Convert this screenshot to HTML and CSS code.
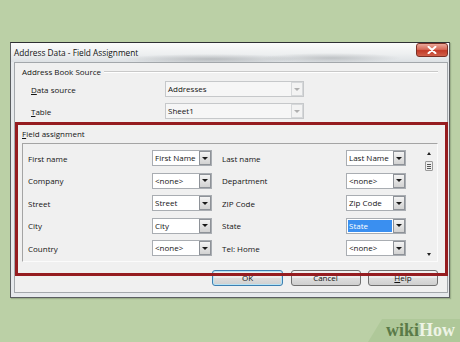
FILE: index.html
```html
<!DOCTYPE html>
<html lang="en">
<head>
<meta charset="utf-8">
<title>Address Data - Field Assignment</title>
<link rel="stylesheet" href="styles.css">
</head>
<body>
<div class="stage">
  <div class="dialog">
    <div class="titlebar">
      <span class="title">Address Data - Field Assignment</span>
      <span class="close">
        <svg width="10" height="8" viewBox="0 0 10 8"><path d="M1.5 0.8 L8.5 7.2 M8.5 0.8 L1.5 7.2" stroke="#fff" stroke-width="2" stroke-linecap="round"/></svg>
      </span>
    </div>
    <div class="panel">
      <div class="group-head"><span>Address Book Source</span><span class="rule"></span></div>
      <div class="src-row">
        <span class="src-label"><u>D</u>ata source</span>
        <div class="combo combo-wide disabled"><span class="combo-text">Addresses</span><span class="drop"><span class="tri"></span></span></div>
      </div>
      <div class="src-row src-row-2">
        <span class="src-label"><u>T</u>able</span>
        <div class="combo combo-wide disabled"><span class="combo-text">Sheet1</span><span class="drop"><span class="tri"></span></span></div>
      </div>
      <div class="field-head"><u>F</u>ield assignment</div>
      <div class="field-box">
        <div class="field-grid">
          <span class="f-label">First name</span>
          <div class="combo"><span class="combo-text">First Name</span><span class="drop"><span class="tri"></span></span></div>
          <span class="f-label">Last name</span>
          <div class="combo"><span class="combo-text">Last Name</span><span class="drop"><span class="tri"></span></span></div>

          <span class="f-label">Company</span>
          <div class="combo"><span class="combo-text">&lt;none&gt;</span><span class="drop"><span class="tri"></span></span></div>
          <span class="f-label">Department</span>
          <div class="combo"><span class="combo-text">&lt;none&gt;</span><span class="drop"><span class="tri"></span></span></div>

          <span class="f-label">Street</span>
          <div class="combo"><span class="combo-text">Street</span><span class="drop"><span class="tri"></span></span></div>
          <span class="f-label">ZIP Code</span>
          <div class="combo"><span class="combo-text">Zip Code</span><span class="drop"><span class="tri"></span></span></div>

          <span class="f-label">City</span>
          <div class="combo"><span class="combo-text">City</span><span class="drop"><span class="tri"></span></span></div>
          <span class="f-label">State</span>
          <div class="combo selected"><span class="combo-text">State</span><span class="drop"><span class="tri"></span></span></div>

          <span class="f-label">Country</span>
          <div class="combo"><span class="combo-text">&lt;none&gt;</span><span class="drop"><span class="tri"></span></span></div>
          <span class="f-label">Tel: Home</span>
          <div class="combo"><span class="combo-text">&lt;none&gt;</span><span class="drop"><span class="tri"></span></span></div>
        </div>
        <div class="scrollbar">
          <span class="arrow-up"></span>
          <span class="thumb"><i></i><i></i><i></i></span>
          <span class="arrow-down"></span>
        </div>
      </div>
      <div class="buttons">
        <span class="btn btn-default">OK</span>
        <span class="btn btn-cancel">Cancel</span>
        <span class="btn btn-help"><u>H</u>elp</span>
      </div>
    </div>
    <div class="annot"></div>
  </div>
  <div class="logo-band"></div>
  <div class="logo"><span class="wiki">wiki</span><span class="how">How</span></div>
</div>
</body>
</html>
```

FILE: styles.css
```css
* { box-sizing: border-box; }

html, body {
  margin: 0;
  padding: 0;
}

body {
  width: 460px;
  height: 342px;
  overflow: hidden;
  background: #bbd0a6;
  font-family: "Open Sans", "Noto Sans", sans-serif;
  font-size: 8px;
  color: #141414;
}

.stage {
  position: relative;
  width: 460px;
  height: 342px;
  padding: 42px 0 0 10px;
  background: #bbd0a6;
}

.dialog {
  position: relative;
  width: 440px;
  height: 256px;
  display: flex;
  flex-direction: column;
  border: 1px solid #5a5d60;
  border-top-color: #2e3033;
  background: #e6e9ec;
  box-shadow: 1px 1px 1px rgba(60, 70, 50, 0.25);
}

.titlebar {
  height: 19px;
  flex: none;
  display: flex;
  align-items: flex-start;
  padding-left: 3px;
  background:
    radial-gradient(ellipse 90px 5px at 200px 16px, rgba(120, 124, 128, 0.4), rgba(120, 124, 128, 0) 100%),
    radial-gradient(ellipse 70px 5px at 320px 15px, rgba(120, 124, 128, 0.35), rgba(120, 124, 128, 0) 100%),
    linear-gradient(to bottom, #fbfbfb 0%, #eef0f1 55%, #dde1e4 100%);
}

.title {
  align-self: center;
  font-size: 8.3px;
  color: #111;
  line-height: 12px;
  margin-top: 1px;
}

.close {
  margin-left: auto;
  margin-right: 1px;
  width: 32px;
  height: 14px;
  border: 1px solid #7a3026;
  border-radius: 3px;
  background: linear-gradient(to bottom, #eaa89a 0%, #d66a58 45%, #c23a27 55%, #d0604a 100%);
  display: flex;
  align-items: center;
  justify-content: center;
}

.close svg { display: block; }

.panel {
  flex: 1;
  margin: 0 1px 4px 3px;
  background: #f0f0f0;
  border: 1px solid #a3a7ab;
  padding: 3px 9px 0 0;
  display: flex;
  flex-direction: column;
}

.group-head {
  display: flex;
  align-items: center;
  height: 12px;
  padding-left: 7px;
  line-height: 12px;
}

.rule {
  flex: 1;
  margin-left: 3px;
  height: 2px;
  border-top: 1px solid #c9c9c9;
  border-bottom: 1px solid #ffffff;
  margin-top: -1px;
}

.src-row {
  display: flex;
  align-items: center;
  margin-top: 3px;
  padding-left: 16px;
  height: 16px;
}

.src-row-2 { margin-top: 6px; }

.src-label {
  width: 134px;
  flex: none;
}

u { text-decoration: underline; text-underline-offset: 1px; }

.combo {
  position: relative;
  display: flex;
  align-items: stretch;
  width: 60px;
  height: 16px;
  background: #ffffff;
  border: 1px solid #a9adb2;
  padding: 0 0 0 1px;
}

.combo-wide { width: 139px; }

.combo-text {
  flex: 1;
  margin: 1px 1px 1px 0;
  line-height: 12px;
  padding-left: 1px;
  white-space: nowrap;
  overflow: hidden;
}

.drop {
  flex: none;
  width: 12px;
  border: 1px solid #8e9298;
  background: linear-gradient(to bottom, #f4f4f4 0%, #e2e2e2 50%, #d2d2d2 100%);
  display: flex;
  align-items: center;
  justify-content: center;
}

.tri {
  width: 0;
  height: 0;
  border-left: 3px solid transparent;
  border-right: 3px solid transparent;
  border-top: 3px solid #1a1a1a;
}

.disabled {
  background: #f6f6f6;
  border-color: #c6c8ca;
}

.disabled .drop {
  border-color: #d6d8da;
  background: #f3f3f3;
}

.disabled .tri { border-top-color: #b0b0b0; }

.selected .combo-text {
  background: #3a8ff0;
  color: #ffffff;
}

.field-head {
  margin-top: 9px;
  padding-left: 7px;
  height: 12px;
  line-height: 12px;
}

.field-box {
  margin: 3px 0 0 7px;
  height: 119px;
  border-top: 1px solid #a4a4a4;
  border-left: 1px solid #a4a4a4;
  border-right: 1px solid #fbfbfb;
  border-bottom: 1px solid #fbfbfb;
  display: flex;
  padding: 6px 4px 0 5px;
}

.field-grid {
  display: grid;
  grid-template-columns: 124px 70px 124px 60px;
  grid-auto-rows: 16px;
  row-gap: 6.5px;
  align-items: center;
}

.f-label { white-space: nowrap; }

.scrollbar {
  margin-left: auto;
  width: 9px;
  display: flex;
  flex-direction: column;
  align-items: center;
  padding-top: 2px;
  height: 106px;
}

.arrow-up {
  width: 0;
  height: 0;
  border-left: 2.5px solid transparent;
  border-right: 2.5px solid transparent;
  border-bottom: 3px solid #222;
}

.thumb {
  margin-top: 6px;
  width: 8px;
  height: 10px;
  border: 1px solid #9a9a9a;
  border-radius: 1px;
  background: #eeeeee;
  display: flex;
  flex-direction: column;
  justify-content: center;
  align-items: center;
  gap: 1px;
}

.thumb i {
  display: block;
  width: 4px;
  height: 1px;
  background: #555;
}

.arrow-down {
  margin-top: auto;
  width: 0;
  height: 0;
  border-left: 2.5px solid transparent;
  border-right: 2.5px solid transparent;
  border-top: 3px solid #222;
}

.buttons {
  margin-top: 8px;
  display: flex;
  justify-content: flex-end;
  gap: 7.5px;
}

.btn {
  width: 70px;
  height: 16px;
  border: 1px solid #707070;
  border-radius: 3px;
  background: linear-gradient(to bottom, #f2f2f2 0%, #ebebeb 48%, #dddddd 52%, #cfcfcf 100%);
  display: flex;
  align-items: center;
  justify-content: center;
  line-height: 12px;
  color: #111;
}

.btn-default {
  width: 71px;
  border-color: #3c7fb1;
  box-shadow: inset 0 0 0 1px #b7e3f5;
}

.annot {
  position: absolute;
  left: 4px;
  top: 79px;
  width: 433px;
  height: 154px;
  border: 3px solid #951c20;
  pointer-events: none;
}

.logo-band {
  position: absolute;
  right: 0;
  bottom: 0;
  width: 92px;
  height: 23px;
  background: #afc899;
  clip-path: polygon(14px 0, 100% 0, 100% 100%, 0 100%);
}

.logo {
  position: absolute;
  right: 5px;
  bottom: 3px;
  font-family: "Liberation Serif", "DejaVu Serif", serif;
  font-weight: bold;
  font-size: 18px;
  line-height: 18px;
}

.wiki { color: #5a7a48; }
.how { color: #eef4e6; }
```
